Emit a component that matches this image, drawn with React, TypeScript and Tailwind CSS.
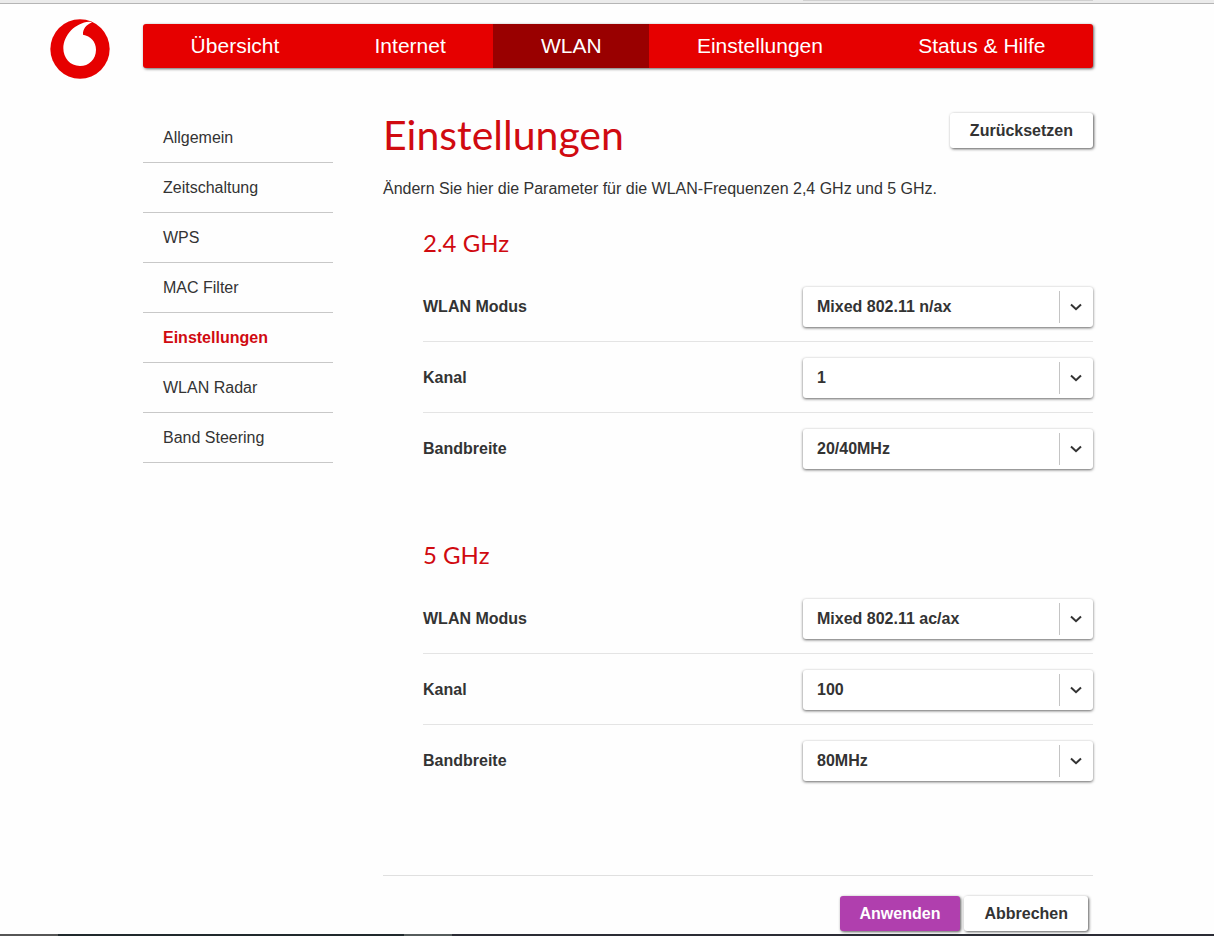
import React from "react";

const tabs = ["Übersicht", "Internet", "WLAN", "Einstellungen", "Status & Hilfe"];

const sideLinks = [
  "Allgemein",
  "Zeitschaltung",
  "WPS",
  "MAC Filter",
  "Einstellungen",
  "WLAN Radar",
  "Band Steering",
];

type Field = { label: string; value: string };
type Band = { id: string; title: string; fields: Field[] };

const bands: Band[] = [
  {
    id: "band24",
    title: "2.4 GHz",
    fields: [
      { label: "WLAN Modus", value: "Mixed 802.11 n/ax" },
      { label: "Kanal", value: "1" },
      { label: "Bandbreite", value: "20/40MHz" },
    ],
  },
  {
    id: "band5",
    title: "5 GHz",
    fields: [
      { label: "WLAN Modus", value: "Mixed 802.11 ac/ax" },
      { label: "Kanal", value: "100" },
      { label: "Bandbreite", value: "80MHz" },
    ],
  },
];

function Logo() {
  return (
    <svg viewBox="30 56 180 180" className="size-15 shrink-0" role="img" aria-label="Vodafone">
      <circle cx="120" cy="146" r="89" fill="#e60000" />
      <path
        fill="#fff"
        d="M157 66C138 73 128 87 129 103C152 107 168 124 168 148C168 177 146 197 120 197C90 197 70 173 70 144C70 103 107 67 147 64C151 64 155 65 157 66Z"
      />
    </svg>
  );
}

function SelectRow({ id, field, last }: { id: string; field: Field; last: boolean }) {
  return (
    <div
      className={
        last
          ? "flex items-start justify-between pt-4 pb-3.5"
          : "flex items-start justify-between border-b border-[#e4e4e4] pt-4 pb-3.5"
      }
    >
      <label htmlFor={id} className="pt-2 text-base font-bold">
        {field.label}
      </label>
      <div className="grid w-[290px] rounded-[3px] bg-white shadow-[0_1px_3px_rgba(0,0,0,0.6)]">
        <select
          id={id}
          defaultValue={field.value}
          className="col-start-1 row-start-1 h-10 w-full cursor-pointer appearance-none bg-transparent pr-10 pl-3.5 text-base font-bold"
        >
          <option>{field.value}</option>
        </select>
        <span className="pointer-events-none col-start-1 row-start-1 my-1 flex w-[34px] items-center justify-center justify-self-end border-l border-[#c4c4c4] pr-0.5">
          <svg viewBox="0 0 12 8" className="h-2 w-3" fill="none" stroke="#333" strokeWidth="2">
            <path d="M1 1.5L6 6.2L11 1.5" />
          </svg>
        </span>
      </div>
    </div>
  );
}

export default function App() {
  return (
    <div className="min-h-screen bg-[#fefefe] font-['Liberation_Sans',Arial,sans-serif] text-base text-[#333]">
      <div className="h-1 border-b border-[#b5b5b5] bg-[#ebebeb] pr-[121px] pl-[803px]">
        <div className="h-px bg-[#d0d0d0]" />
      </div>

      <header className="flex items-start gap-[33px] pt-[15px] pr-[121px] pl-[50px]">
        <a href="#start" className="-mb-3">
          <Logo />
        </a>
        <nav className="mt-[5px] flex h-11 flex-1 overflow-clip rounded-[3px] bg-[#e60000] text-[21px] text-white shadow-[1px_1px_3px_rgba(0,0,0,0.6)]">
          {tabs.map((tab) => (
            <a
              key={tab}
              href="#tab"
              className={
                tab === "WLAN"
                  ? "flex flex-auto items-center justify-center bg-[#990000]"
                  : "flex flex-auto items-center justify-center"
              }
            >
              {tab}
            </a>
          ))}
        </nav>
      </header>

      <div className="flex gap-[50px] pt-[45px] pr-[121px] pl-[143px]">
        <nav className="w-[190px] shrink-0">
          {sideLinks.map((link) => (
            <a
              key={link}
              href="#seite"
              className={
                link === "Einstellungen"
                  ? "flex h-[50px] items-center border-b border-[#c8c8c8] pl-5 font-bold text-[#d00a10]"
                  : "flex h-[50px] items-center border-b border-[#c8c8c8] pl-5"
              }
            >
              {link}
            </a>
          ))}
        </nav>

        <main className="min-w-0 flex-1">
          <div className="flex items-start justify-between">
            <h1 className="font-[Lato,sans-serif] text-[41px] leading-[44px] text-[#d00a10]">
              Einstellungen
            </h1>
            <button
              type="button"
              className="h-[35px] rounded-[3px] bg-white px-5 font-bold shadow-[1px_1px_3px_rgba(0,0,0,0.65)]"
            >
              Zurücksetzen
            </button>
          </div>
          <p className="mt-5 leading-6">
            Ändern Sie hier die Parameter für die WLAN-Frequenzen 2,4 GHz und 5 GHz.
          </p>

          <form className="pt-[26px]">
            {bands.map((band) => (
              <section key={band.id} className="pb-14 pl-10">
                <h2 className="font-[Lato,sans-serif] text-2xl leading-8 text-[#d00a10]">
                  {band.title}
                </h2>
                <div className="mt-3">
                  {band.fields.map((field, i) => (
                    <SelectRow
                      key={field.label}
                      id={`${band.id}-${i}`}
                      field={field}
                      last={i === band.fields.length - 1}
                    />
                  ))}
                </div>
              </section>
            ))}
            <div className="mt-6 flex justify-end gap-1 border-t border-[#e0e0e0] pt-5 pr-[5px] pb-[3px]">
              <button
                type="button"
                className="h-[35px] rounded-[3px] bg-[#b03fae] px-5 font-bold text-white shadow-[1px_1px_3px_rgba(0,0,0,0.65)]"
              >
                Anwenden
              </button>
              <button
                type="button"
                className="h-[35px] rounded-[3px] bg-white px-5 font-bold shadow-[1px_1px_3px_rgba(0,0,0,0.65)]"
              >
                Abbrechen
              </button>
            </div>
          </form>
        </main>
      </div>

      <div className="flex h-0.5 bg-[#2b2c35]">
        <div className="w-[58px] bg-[#555]" />
        <div className="w-[346px] bg-[#20292c]" />
        <div className="w-12 bg-[#555c5c]" />
      </div>
    </div>
  );
}
